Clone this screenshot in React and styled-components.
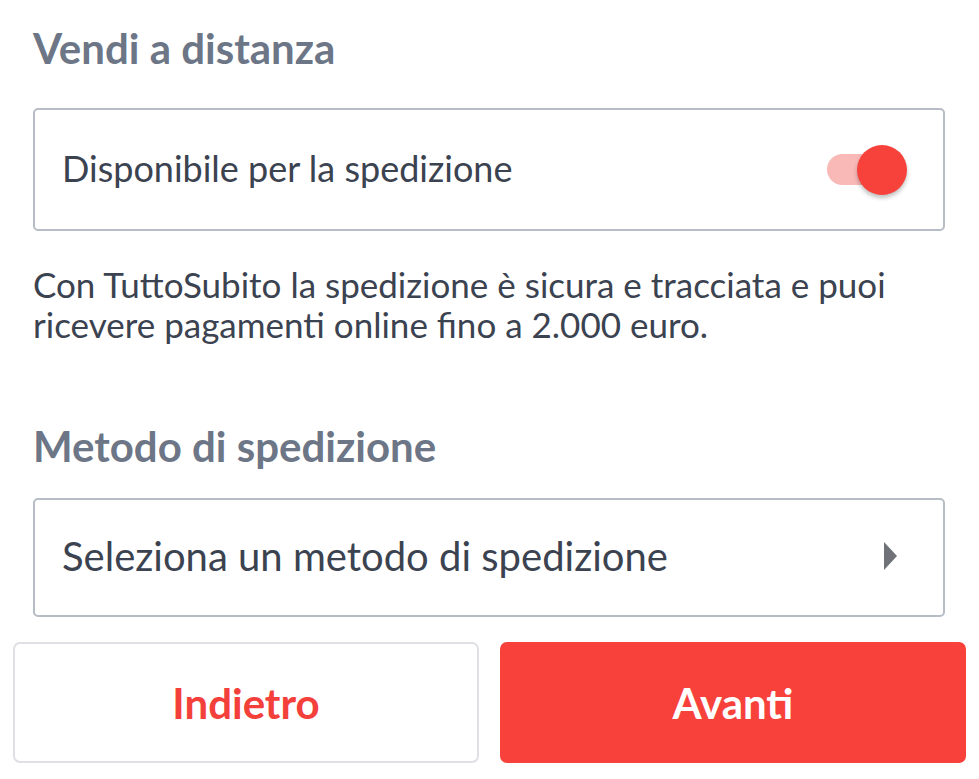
import React from "react";
import styled, { createGlobalStyle } from "styled-components";

const GlobalStyle = createGlobalStyle`
  html, body {
    margin: 0;
    padding: 0;
    background: #ffffff;
  }
  body {
    font-family: Lato, "Noto Sans", sans-serif;
  }
`;

const Page = styled.div`
  width: 979px;
  height: 779px;
  display: flex;
  flex-direction: column;
  overflow: hidden;
`;

const Section = styled.div`
  display: flex;
  flex-direction: column;
  padding: 0 34px 0 33px;
`;

const Title = styled.h2`
  margin: ${(p) => p.top}px 0 0;
  font-size: 42px;
  line-height: 50px;
  font-weight: 700;
  color: #6c7686;
`;

const Field = styled.div`
  margin-top: ${(p) => p.top}px;
  height: ${(p) => p.h}px;
  box-sizing: border-box;
  border: 2px solid #b7bdc6;
  border-radius: 5px;
  display: flex;
  align-items: center;
  justify-content: space-between;
  padding: 0 36px 4px 27px;
`;

const FieldLabel = styled.span`
  font-size: ${(p) => p.size}px;
  color: #3b4250;
`;

const Toggle = styled.div`
  position: relative;
  width: 80px;
  height: 50px;
  margin-top: 4px;
  display: flex;
  align-items: center;
`;

const Track = styled.div`
  width: 62px;
  height: 31px;
  border-radius: 16px;
  background: #f9b9b7;
`;

const Knob = styled.div`
  position: absolute;
  right: 0;
  top: 0;
  width: 50px;
  height: 50px;
  border-radius: 50%;
  background: #f7423b;
  box-shadow: 0 3px 4px rgba(0, 0, 0, 0.25);
`;

const Note = styled.p`
  margin: 33px 0 0;
  font-size: 35px;
  line-height: 40px;
  color: #3b4250;
`;

const Caret = styled.svg`
  width: 15px;
  height: 28px;
  margin-right: 9px;
`;

const Buttons = styled.div`
  display: grid;
  grid-template-columns: 1fr 1fr;
  gap: 21px;
  padding: 0 13px;
  margin-top: 25px;
`;

const Button = styled.button`
  height: 121px;
  border-radius: 7px;
  font-family: Lato, "Noto Sans", sans-serif;
  font-size: 42px;
  font-weight: 700;
  cursor: pointer;
  border: ${(p) => (p.primary ? "none" : "2px solid #dfe0e5")};
  background: ${(p) => (p.primary ? "#f8413b" : "#ffffff")};
  color: ${(p) => (p.primary ? "#ffffff" : "#f3403b")};
`;

export default function App() {
  return (
    <Page>
      <GlobalStyle />
      <Section>
        <Title top={23}>Vendi a distanza</Title>
        <Field top={35} h={123}>
          <FieldLabel size={36}>Disponibile per la spedizione</FieldLabel>
          <Toggle>
            <Track />
            <Knob />
          </Toggle>
        </Field>
        <Note>
          Con TuttoSubito la spedizione è sicura e tracciata e puoi ricevere
          pagamenti online fino a 2.000 euro.
        </Note>
        <Title top={77}>Metodo di spedizione</Title>
        <Field top={27} h={119}>
          <FieldLabel size={40}>Seleziona un metodo di spedizione</FieldLabel>
          <Caret viewBox="0 0 15 28">
            <path d="M1 0 L14 14 L1 28 Z" fill="#6f7378" />
          </Caret>
        </Field>
      </Section>
      <Buttons>
        <Button>Indietro</Button>
        <Button primary>Avanti</Button>
      </Buttons>
    </Page>
  );
}
